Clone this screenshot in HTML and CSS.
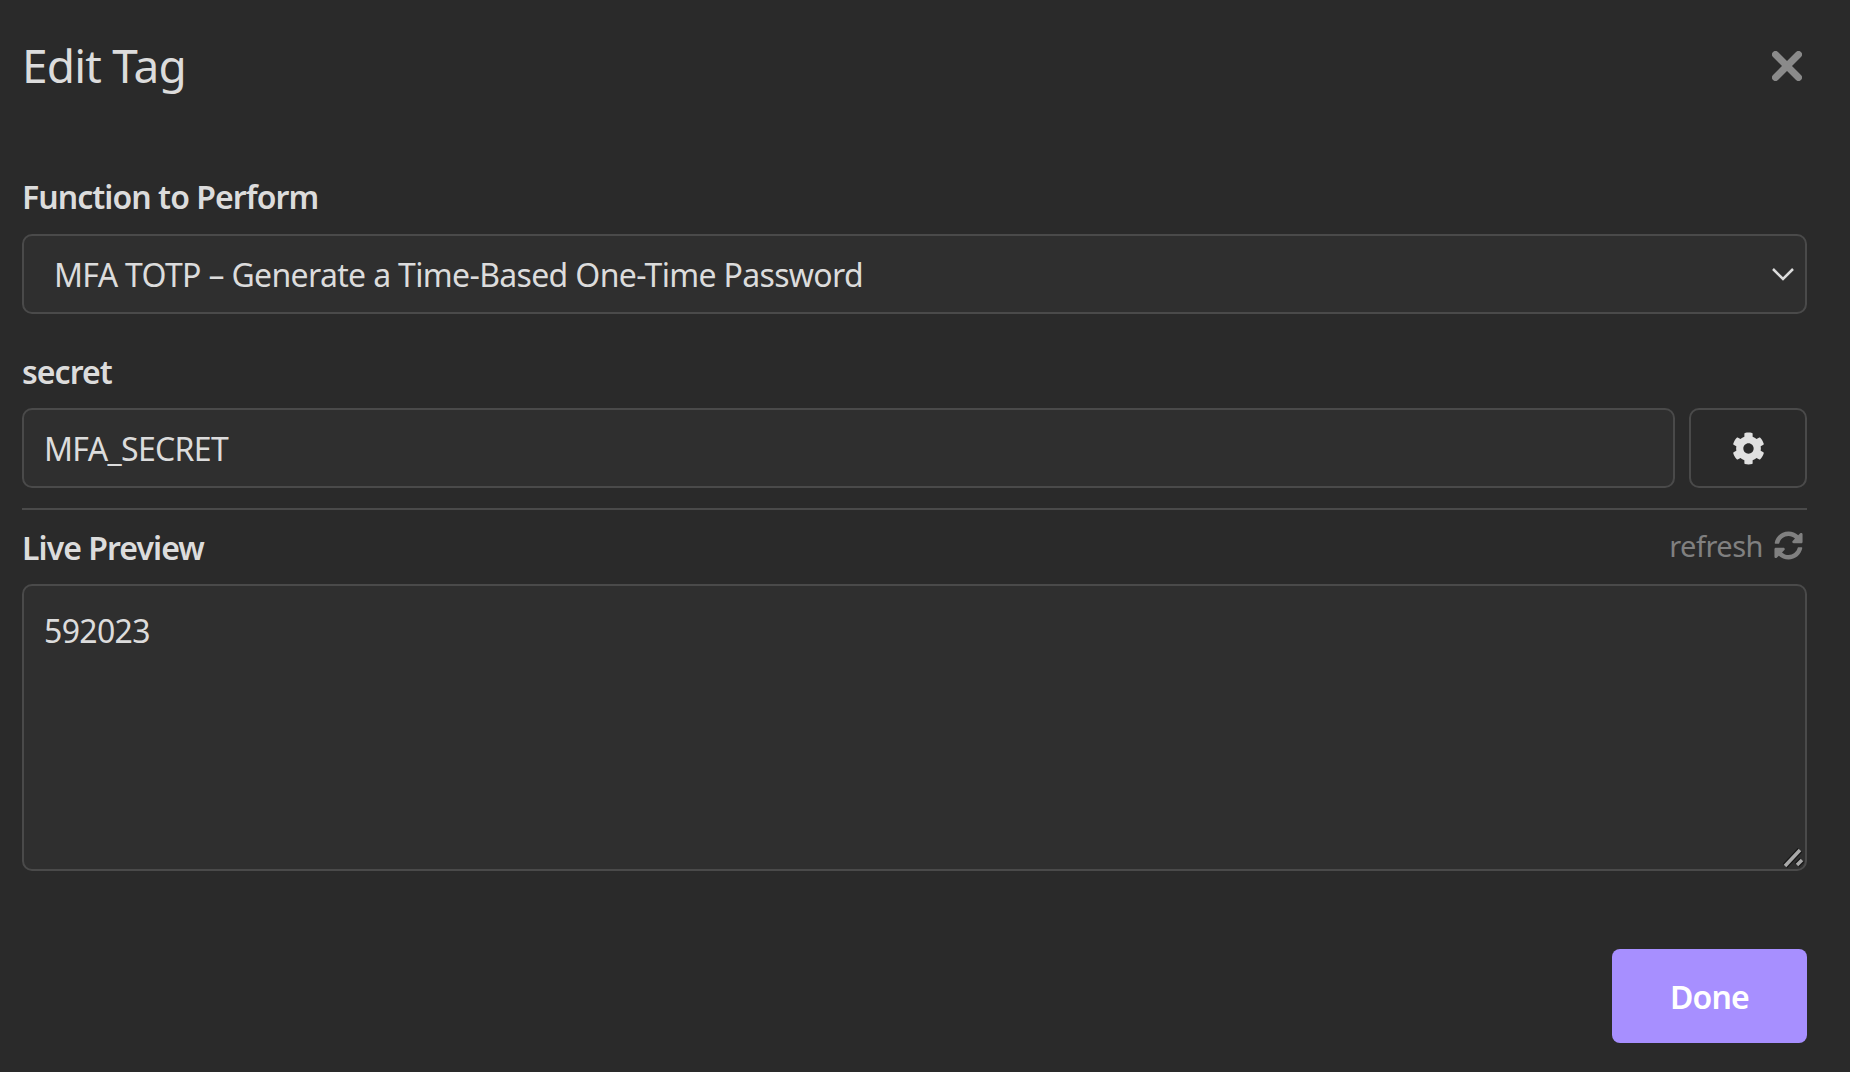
FILE: index.html
```html
<!DOCTYPE html>
<html lang="en">
<head>
    <meta charset="UTF-8">
    <title>Edit Tag</title>
    <link rel="stylesheet" href="styles.css">
</head>
<body>
    <div class="modal">
        <div class="modal-header">
            <h2>Edit Tag</h2>
            <button class="close-button" type="button" aria-label="Close">
                <svg viewBox="0 0 30 30" width="30" height="30"><path d="M3.5 3.5L26.5 26.5M26.5 3.5L3.5 26.5"/></svg>
            </button>
        </div>

        <label class="field-label first" for="function-select">Function to Perform</label>
        <div class="select-wrap">
            <select id="function-select">
                <option>MFA TOTP – Generate a Time-Based One-Time Password</option>
            </select>
            <svg class="select-arrow" viewBox="0 0 22 14" width="22" height="14"><path d="M1 2L11 12L21 2"/></svg>
        </div>

        <label class="field-label" for="secret-input">secret</label>
        <div class="input-row">
            <input type="text" id="secret-input" value="MFA_SECRET">
            <button class="gear-button" type="button" aria-label="Settings">
                <svg viewBox="0 0 512 512" width="33" height="33"><path d="M487.4 315.7l-42.6-24.6c4.3-23.2 4.3-47 0-70.2l42.6-24.6c4.9-2.8 7.1-8.6 5.5-14-11.1-35.6-30-67.8-54.7-94.6-3.8-4.1-10-5.1-14.8-2.3L380.8 110c-17.9-15.4-38.5-27.3-60.8-35.1V25.8c0-5.6-3.9-10.5-9.4-11.7-36.7-8.2-74.3-7.8-109.2 0-5.5 1.2-9.4 6.1-9.4 11.7V75c-22.2 7.9-42.8 19.8-60.8 35.1L88.7 85.5c-4.9-2.8-11-1.9-14.8 2.3-24.7 26.7-43.6 58.9-54.7 94.6-1.7 5.4.6 11.2 5.5 14L67.3 221c-4.3 23.2-4.3 47 0 70.2l-42.6 24.6c-4.9 2.8-7.1 8.6-5.5 14 11.1 35.6 30 67.8 54.7 94.6 3.8 4.1 10 5.1 14.8 2.3l42.6-24.6c17.9 15.4 38.5 27.3 60.8 35.1v49.2c0 5.6 3.9 10.5 9.4 11.7 36.7 8.2 74.3 7.8 109.2 0 5.5-1.2 9.4-6.1 9.4-11.7v-49.2c22.2-7.9 42.8-19.8 60.8-35.1l42.6 24.6c4.9 2.8 11 1.9 14.8-2.3 24.7-26.7 43.6-58.9 54.7-94.6 1.5-5.5-.7-11.3-5.6-14.1zM256 336c-44.1 0-80-35.9-80-80s35.9-80 80-80 80 35.9 80 80-35.9 80-80 80z"/></svg>
            </button>
        </div>

        <hr class="divider">

        <div class="preview-header">
            <label class="preview-label" for="preview">Live Preview</label>
            <span class="refresh">refresh
                <svg viewBox="0 0 512 512" width="29" height="29"><path d="M370.72 133.28C339.458 104.008 298.888 87.962 255.848 88c-77.458.068-144.328 53.178-162.791 126.85-1.344 5.363-6.122 9.15-11.651 9.15H24.103c-7.498 0-13.194-6.807-11.807-14.176C33.933 94.924 134.813 8 256 8c66.448 0 126.791 26.136 171.315 68.685L463.03 40.97C478.149 25.851 504 36.559 504 57.941V192c0 13.255-10.745 24-24 24H345.941c-21.382 0-32.09-25.851-16.971-40.971l41.75-41.749zM32 296h134.059c21.382 0 32.09 25.851 16.971 40.971l-41.75 41.75c31.262 29.273 71.835 45.319 114.876 45.28 77.418-.07 144.315-53.144 162.787-126.849 1.344-5.363 6.122-9.15 11.651-9.15h57.304c7.498 0 13.194 6.807 11.807 14.176C478.067 417.076 377.187 504 256 504c-66.448 0-126.791-26.136-171.315-68.685L48.97 471.03C33.851 486.149 8 475.441 8 454.059V320c0-13.255 10.745-24 24-24z"/></svg>
            </span>
        </div>
        <div class="preview-wrap">
            <textarea id="preview">592023</textarea>
            <svg class="resize-grip" viewBox="0 0 22 22" width="22" height="22">
                <path class="grip-shadow" d="M3 20L18 4M15 19L20 14"/>
                <path class="grip-line" d="M3 20L18 4M15 19L20 14"/>
            </svg>
        </div>

        <div class="modal-footer">
            <button class="done-button" type="button">Done</button>
        </div>
    </div>
</body>
</html>
```

FILE: styles.css
```css
body {
    margin: 0;
    height: 1072px;
    overflow: hidden;
    background-color: #2a2a2a;
    color: #dcdcdc;
    font-family: 'Noto Sans', 'Open Sans', sans-serif;
    font-size: 32px;
    letter-spacing: -0.66px;
}
.modal {
    display: flex;
    flex-direction: column;
    padding: 0 43px 0 22px;
}
.modal-header {
    display: flex;
    justify-content: space-between;
    align-items: center;
    height: 132px;
}
.modal-header h2 {
    margin: 0 0 2px;
    font-size: 46px;
    font-weight: 400;
    line-height: 130px;
    letter-spacing: -0.8px;
}
.close-button {
    background: none;
    border: none;
    padding: 0;
    margin-right: 5px;
    display: flex;
}
.close-button path {
    fill: none;
    stroke: #8a8a8a;
    stroke-width: 7;
    stroke-linecap: round;
}
.field-label {
    display: block;
    height: 46px;
    margin: 35px 0 13px;
    line-height: 46px;
    font-weight: 600;
    letter-spacing: -0.95px;
}
.field-label.first {
    margin: 42px 0 14px;
}
.select-wrap {
    position: relative;
}
select,
input,
textarea {
    display: block;
    box-sizing: border-box;
    width: 100%;
    background-color: #2f2f2f;
    border: 2px solid #4a4a4a;
    border-radius: 10px;
    color: #dcdcdc;
    font: inherit;
    letter-spacing: inherit;
    outline: none;
}
select {
    height: 80px;
    padding: 0 60px 0 30px;
    appearance: none;
}
.select-arrow {
    position: absolute;
    right: 13px;
    top: 33px;
}
.select-arrow path {
    fill: none;
    stroke: #dcdcdc;
    stroke-width: 2.5;
}
.input-row {
    display: flex;
    gap: 14px;
}
.input-row input {
    flex: 1;
    height: 80px;
    padding: 0 20px;
}
.gear-button {
    width: 118px;
    height: 80px;
    flex: none;
    display: flex;
    align-items: center;
    justify-content: center;
    background: transparent;
    border: 2px solid #4a4a4a;
    border-radius: 10px;
    padding: 0;
}
.gear-button path {
    fill: #e0e0e0;
}
.divider {
    width: 100%;
    height: 2px;
    margin: 20px 0 0;
    border: none;
    background-color: #4a4a4a;
}
.preview-header {
    display: flex;
    justify-content: space-between;
    align-items: center;
    height: 74px;
}
.preview-label {
    font-weight: 600;
    letter-spacing: -0.95px;
}
.refresh {
    display: flex;
    align-items: center;
    gap: 11px;
    padding: 0 4px 4px 0;
    color: #808080;
    font-size: 29px;
    letter-spacing: -0.5px;
}
.refresh path {
    fill: #808080;
}
.preview-wrap {
    position: relative;
}
textarea {
    height: 287px;
    padding: 23px 20px;
    resize: none;
}
.resize-grip {
    position: absolute;
    right: 3px;
    bottom: 3px;
}
.grip-shadow {
    fill: none;
    stroke: #151515;
    stroke-width: 6;
}
.grip-line {
    fill: none;
    stroke: #a8a8a8;
    stroke-width: 3.5;
}
.modal-footer {
    display: flex;
    justify-content: flex-end;
    margin-top: 78px;
}
.done-button {
    width: 195px;
    height: 94px;
    background-color: #a78fff;
    border: none;
    border-radius: 8px;
    color: #fff;
    font: inherit;
    font-weight: 600;
    letter-spacing: -0.8px;
}
```
